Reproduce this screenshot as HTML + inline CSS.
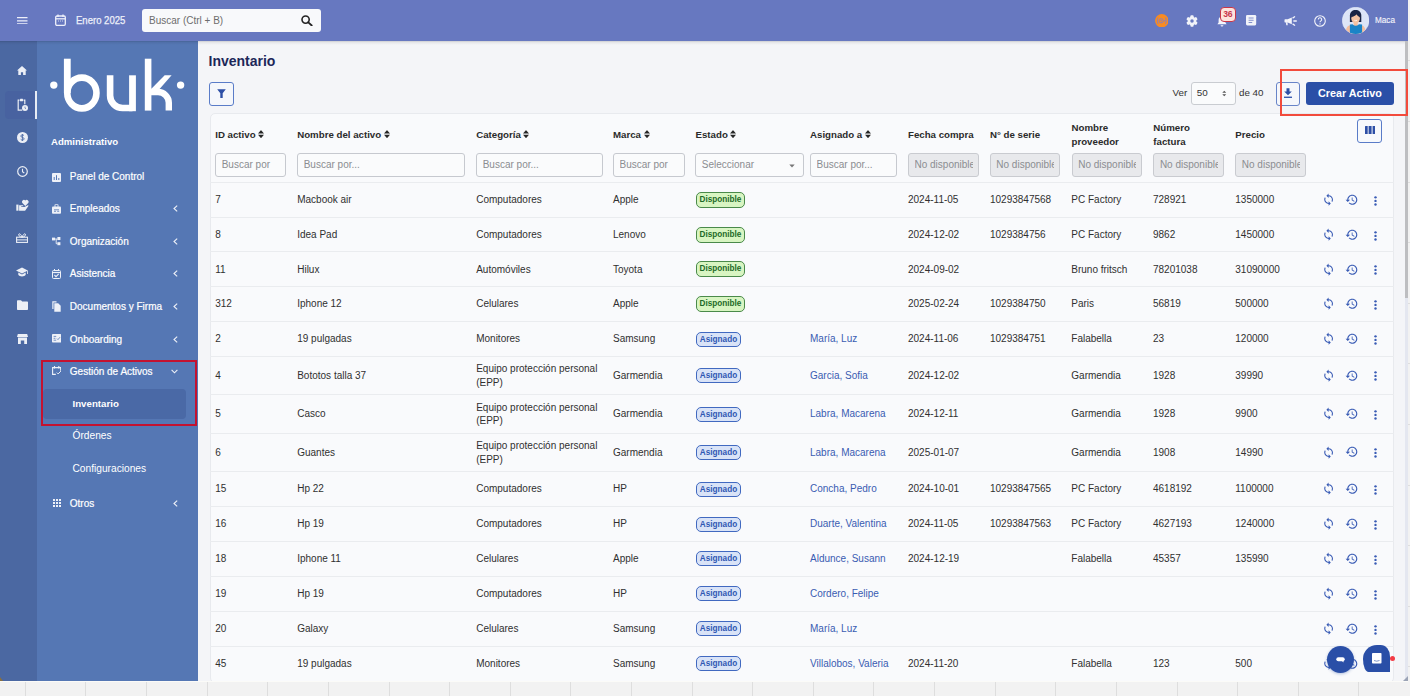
<!DOCTYPE html><html><head><meta charset="utf-8"><style>
*{box-sizing:border-box;margin:0;padding:0}
html,body{width:1410px;height:696px;overflow:hidden;background:#efefef;font-family:"Liberation Sans", sans-serif;}
.a{position:absolute}
.t{position:absolute;white-space:nowrap;line-height:1}
#top{left:0;top:0;width:1408px;height:41px;background:#6778c0}
#rail{left:0;top:41px;width:37px;height:640px;background:#4b68a2}
#side{left:37px;top:41px;width:161px;height:640px;background:#5577b4}
#main{left:198px;top:41px;width:1210px;height:640px;background:#f4f5f8}
#card{left:209.5px;top:113px;width:1184.5px;height:570px;background:#f9fafc;border:1px solid #e8eaee;border-radius:5px}
.hl{position:absolute;left:210px;width:1184px;height:1px;background:#eaecef}
.menu{color:#fff;font-size:10px;-webkit-text-stroke:0.2px #fff}
.inp{position:absolute;top:153px;height:24px;border:1px solid #c6c9cf;border-radius:3px;background:#fafbfc;overflow:hidden}
.inp span{position:absolute;left:5.5px;right:4.8px;overflow:hidden;top:6px;font-size:10px;color:#8b8d91;white-space:nowrap;line-height:1}
.dis{background:#e8e9ec;border-color:#c9cbd0}
.hd{font-size:9.7px;font-weight:bold;color:#2b2b2b}
.cell{font-size:10px;color:#303030}
.lnk{font-size:10px;color:#3a5cb2}
.bd{position:absolute;height:16px;border-radius:5px;font-size:8.2px;font-weight:bold;line-height:14px;text-align:center}
.bg{background:#d8f5c2;border:1px solid #4a8a4a;color:#1e6a28}
.bb{background:#d9e3f7;border:1px solid #4169c0;color:#2f57b3}
</style></head><body><div id="top" class="a"></div>
<div class="a" style="left:1408px;top:0;width:2px;height:696px;background:#f2f2f2"></div>
<div class="a" style="left:1408px;top:60px;width:2px;height:1px;background:#dedede"></div>
<div class="a" style="left:1408px;top:121px;width:2px;height:1px;background:#dedede"></div>
<div class="a" style="left:1408px;top:182px;width:2px;height:1px;background:#dedede"></div>
<div class="a" style="left:1408px;top:242px;width:2px;height:1px;background:#dedede"></div>
<div class="a" style="left:1408px;top:303px;width:2px;height:1px;background:#dedede"></div>
<div class="a" style="left:1408px;top:363px;width:2px;height:1px;background:#dedede"></div>
<div class="a" style="left:1408px;top:424px;width:2px;height:1px;background:#dedede"></div>
<div class="a" style="left:1408px;top:485px;width:2px;height:1px;background:#dedede"></div>
<div class="a" style="left:1408px;top:545px;width:2px;height:1px;background:#dedede"></div>
<div class="a" style="left:1408px;top:606px;width:2px;height:1px;background:#dedede"></div>
<div class="a" style="left:1408px;top:666px;width:2px;height:1px;background:#dedede"></div>
<div id="rail" class="a"></div>
<div id="side" class="a"></div>
<div id="main" class="a"></div>
<div class="a" style="left:0;top:41px;width:1408px;height:4px;background:linear-gradient(rgba(0,0,0,0.16),rgba(0,0,0,0.05) 40%,rgba(0,0,0,0))"></div>
<svg class="a" style="left:17px;top:16.6px" width="10.5" height="7.6" viewBox="0 0 10.5 7.6"><path d="M0 0.7h10.5M0 3.8h10.5M0 6.9h10.5" stroke="#eef0fa" stroke-width="1.3"/></svg>
<svg class="a" style="left:55px;top:14px" width="11" height="12" viewBox="0 0 11 12"><rect x="0.7" y="2" width="9.6" height="9.3" rx="1.2" fill="none" stroke="#eef0fa" stroke-width="1.3"/><path d="M0.7 4.8h9.6" stroke="#eef0fa" stroke-width="1.3"/><path d="M3 0.5v2.5M8 0.5v2.5" stroke="#eef0fa" stroke-width="1.3"/><path d="M3 7h1M5 7h1M7 7h1" stroke="#eef0fa" stroke-width="0.8"/></svg>
<div class="t " style="left:75.8px;top:14.6px;font-size:10.6px;color:#eef0fa;-webkit-text-stroke:0.25px #eef0fa;transform:scaleX(0.9);transform-origin:0 0">Enero 2025</div>
<div class="a" style="left:142px;top:9px;width:179px;height:23px;background:#f8f9fb;border-radius:3px"></div>
<div class="t " style="left:149px;top:15.5px;font-size:10px;color:#6d6d6d">Buscar (Ctrl + B)</div>
<svg class="a" style="left:301px;top:14.5px" width="12" height="11" viewBox="0 0 12 11"><circle cx="4.6" cy="4.6" r="3.6" fill="none" stroke="#222" stroke-width="1.6"/><path d="M7.3 7.3l3.4 3.2" stroke="#222" stroke-width="1.8" stroke-linecap="round"/></svg>
<svg class="a" style="left:1154.6px;top:13.5px" width="13.6" height="13.6" viewBox="0 0 13.6 13.6"><circle cx="6.8" cy="6.8" r="6.75" fill="#f98b20"/><g fill="none" stroke="#8a80b8" stroke-width="0.95"><circle cx="6.2" cy="6.8" r="2.1"/><path d="M3 3.6Q1.6 6.8 3 10M10.6 3.6Q12 6.8 10.6 10M8.3 6.8h2.4"/></g><circle cx="6.2" cy="6.8" r="0.8" fill="#8a80b8"/></svg>
<svg class="a" style="left:1185.6px;top:14.8px" width="12" height="12" viewBox="0 0 12 12"><g fill="#f1f3f9"><circle cx="6" cy="6" r="4.3"/><rect x="4.4" y="0.3" width="3.2" height="3.2" rx="0.9" transform="rotate(0 6 6)"/><rect x="4.4" y="0.3" width="3.2" height="3.2" rx="0.9" transform="rotate(60 6 6)"/><rect x="4.4" y="0.3" width="3.2" height="3.2" rx="0.9" transform="rotate(120 6 6)"/><rect x="4.4" y="0.3" width="3.2" height="3.2" rx="0.9" transform="rotate(180 6 6)"/><rect x="4.4" y="0.3" width="3.2" height="3.2" rx="0.9" transform="rotate(240 6 6)"/><rect x="4.4" y="0.3" width="3.2" height="3.2" rx="0.9" transform="rotate(300 6 6)"/></g><circle cx="6" cy="6" r="1.75" fill="#6879c1"/></svg>
<svg class="a" style="left:1216.5px;top:15.5px" width="10" height="11" viewBox="0 0 10 11"><path fill="#f4f5fb" d="M5 0.5c-2 0-3.4 1.5-3.4 3.5v2.6L0.4 8.3h9.2L8.4 6.6V4C8.4 2 7 0.5 5 0.5zM3.6 9.2a1.4 1.4 0 0 0 2.8 0z"/></svg>
<div class="a" style="left:1220px;top:7px;width:15.5px;height:14.5px;background:#fde3dd;border:1px solid #c8364a;border-radius:4px;color:#c8364a;font-size:8.6px;font-weight:bold;text-align:center;line-height:12.5px;letter-spacing:-0.4px">36</div>
<svg class="a" style="left:1246.4px;top:15.2px" width="10.2" height="10.4" viewBox="0 0 10.2 10.4"><rect x="0" y="0" width="10.2" height="10.4" rx="1.3" fill="#f1f3f9"/><path d="M2.6 3h5M2.6 5.2h5M2.6 7.5h3.6" stroke="#8290cc" stroke-width="1.1"/></svg>
<svg class="a" style="left:1283.5px;top:15.5px" width="13" height="10" viewBox="0 0 13 10"><rect x="0.5" y="3.3" width="3.2" height="3.1" rx="0.6" fill="#f4f5fb"/><path d="M3.1 3.4L7.8 1.5v6.7L3.1 6.3z" fill="#f4f5fb"/><path d="M1.9 6.2h1.6l.2 3H2.3z" fill="#f4f5fb"/><path d="M9 1.9l1.6-1.1M9.8 5h2.5M9 8.1l1.6 1.1" stroke="#f4f5fb" stroke-width="1.3" stroke-linecap="round"/></svg>
<svg class="a" style="left:1314px;top:14.8px" width="12" height="12" viewBox="0 0 12 12"><circle cx="6" cy="6" r="5.3" fill="none" stroke="#f4f5fb" stroke-width="1.1"/><path d="M4.3 4.5a1.7 1.7 0 1 1 2.5 1.5c-.6.3-.8.6-.8 1.3" fill="none" stroke="#f4f5fb" stroke-width="1.1"/><circle cx="6" cy="8.9" r="0.7" fill="#f4f5fb"/></svg>
<svg class="a" style="left:1342px;top:6.8px" width="27.4" height="27.4" viewBox="0 0 27.4 27.4"><defs><clipPath id="av"><circle cx="13.7" cy="13.6" r="13.3"/></clipPath></defs><circle cx="13.7" cy="13.6" r="13.4" fill="#dde5f7" stroke="#eef2fb" stroke-width="0.5"/><g clip-path="url(#av)"><path d="M7.9 15V8.5C7.9 5 10.5 3 13.6 3S19.3 5 19.3 8.5V15z" fill="#1a2444"/><path d="M3.5 27.4C3.5 21 5.5 18.2 9 18h9.4c3.5.2 5.5 3 5.5 9.4z" fill="#f4bf9f"/><rect x="11.7" y="14" width="4" height="5" fill="#f4bf9f"/><path d="M7.9 27.4V17.4l2.6-.2q3.2 3.3 6.5 0l3.1.2V27.4z" fill="#1a84c7"/><ellipse cx="13.6" cy="11.6" rx="4.3" ry="4.7" fill="#f5c3a2"/><path d="M9.2 10C9.5 6.5 11 5 13.6 5s4.4 1.7 4.6 5c-1.6-.4-3-1.5-3.6-2.8C13.6 8.5 11.5 9.6 9.2 10z" fill="#1a2444"/><path d="M12.4 13.3q1.3.9 2.6 0" stroke="#fff" stroke-width="0.8" fill="none"/></g></svg>
<div class="t " style="left:1375.3px;top:16.3px;font-size:8.9px;color:#f2f3fa;transform:scaleX(0.92);transform-origin:0 0;-webkit-text-stroke:0.15px #f2f3fa">Maca</div>
<div class="a" style="left:4.5px;top:91px;width:31px;height:28px;background:#4862a0;border-radius:4px"></div>
<div class="a" style="left:35px;top:91px;width:2px;height:28px;background:#e8ecf4"></div>
<svg class="a" style="left:17px;top:66px" width="10" height="9" viewBox="0 0 10 9"><path fill="#eceff6" d="M5 0L0 4.4h1.3V9h2.6V6.3h2.2V9h2.6V4.4H10z"/></svg>
<svg class="a" style="left:16.5px;top:97.5px" width="11" height="13" viewBox="0 0 11 13"><path d="M2.5 2.2H1.2v10h4" fill="none" stroke="#eceff6" stroke-width="1.2"/><path d="M6.5 2.2h1.3v4" fill="none" stroke="#eceff6" stroke-width="1.2"/><rect x="3" y="0.8" width="3" height="2.4" rx="0.5" fill="#eceff6"/><circle cx="8" cy="10" r="3" fill="#eceff6"/><path d="M8 8.6v1.6l.9.6" stroke="#4862a0" stroke-width="0.7" fill="none"/></svg>
<svg class="a" style="left:16.5px;top:132px" width="11" height="11" viewBox="0 0 11 11"><circle cx="5.5" cy="5.5" r="5.5" fill="#eceff6"/><path d="M7 3.6c-.4-.5-1-.7-1.6-.7-.9 0-1.6.5-1.6 1.2 0 1.6 3.3.9 3.3 2.7 0 .7-.7 1.3-1.7 1.3-.7 0-1.3-.3-1.7-.8M5.4 2v7" fill="none" stroke="#4a68a4" stroke-width="0.9"/></svg>
<svg class="a" style="left:16.5px;top:165.5px" width="11" height="11" viewBox="0 0 11 11"><circle cx="5.5" cy="5.5" r="4.8" fill="none" stroke="#eceff6" stroke-width="1.2"/><path d="M5.5 2.8v2.9l1.8 1.3" fill="none" stroke="#eceff6" stroke-width="1.1"/></svg>
<svg class="a" style="left:15.5px;top:198.5px" width="13" height="12" viewBox="0 0 13 12"><path d="M9.3 6.9L6.6 4.2A1.75 1.75 0 0 1 9.3 1.5A1.75 1.75 0 0 1 12 4.2z" fill="#eceff6"/><rect x="0.3" y="5.6" width="2.2" height="6.1" fill="#eceff6"/><path d="M3.1 6.2h3.1c.8 0 1.3.5 1.3 1.1H5.3v.8h3.1l3-1.7c.6-.3 1.2.1 1 .6L9.1 11.7h-6z" fill="#eceff6"/></svg>
<svg class="a" style="left:15.8px;top:231.8px" width="12.2" height="11" viewBox="0 0 12.2 11"><path d="M6.1 5.2C5.2 2.6 3.6 1.2 2.9 2S3.1 5 6.1 5.2zM6.1 5.2C7 2.6 8.6 1.2 9.3 2S9.1 5 6.1 5.2z" fill="none" stroke="#eceff6" stroke-width="1"/><rect x="0.6" y="5.2" width="11" height="5.2" fill="none" stroke="#eceff6" stroke-width="1.1"/><path d="M0.6 7.9h11" stroke="#eceff6" stroke-width="1"/></svg>
<svg class="a" style="left:16px;top:266.5px" width="12" height="10" viewBox="0 0 12 10"><path fill="#eceff6" d="M6 0.5L0 3.5l6 3 5-2.5v3h.8V3.5z"/><path fill="#eceff6" d="M2.3 5.5v2.2C3 8.7 4.5 9.4 6 9.4s3-.7 3.7-1.7V5.5L6 7.4z"/></svg>
<svg class="a" style="left:16.5px;top:300px" width="11" height="10" viewBox="0 0 11 10"><path fill="#eceff6" d="M0 1.2C0 .6.4.2 1 .2h3l1.2 1.3H10c.6 0 1 .4 1 1V9c0 .6-.4 1-1 1H1c-.6 0-1-.4-1-1z"/></svg>
<svg class="a" style="left:16.5px;top:334px" width="11" height="10" viewBox="0 0 11 10"><path fill="#eceff6" d="M0.8 0h9.4l.8 3H0z"/><path fill="#eceff6" d="M1 3.6h9V10H7.2V6.5H3.8V10H1z"/></svg>
<svg class="a" style="left:40px;top:50px" width="155" height="70" viewBox="40 50 155 70"><circle cx="53.8" cy="85.1" r="3.7" fill="#ffffff"/><circle cx="180.6" cy="85.1" r="3.7" fill="#ffffff"/><path d="M67.3 58.7V93" stroke="#ffffff" stroke-width="6.8" fill="none"/><ellipse cx="81.85" cy="93" rx="14.6" ry="15.4" stroke="#ffffff" stroke-width="6.6" fill="none"/><path d="M110.1 75.3V95.5a12.5 12.5 0 0 0 12.5 12.5H132.5" stroke="#ffffff" stroke-width="6.6" fill="none"/><path d="M132.5 75.3V111.2" stroke="#ffffff" stroke-width="6.8" fill="none"/><path d="M148.1 58.7V110.6" stroke="#ffffff" stroke-width="6.6" fill="none"/><path d="M151 92H158a10.8 10.8 0 0 1 10.8 10.8V110.6" stroke="#ffffff" stroke-width="6.4" fill="none"/><path d="M151.4 88.8L164.7 75.3H171.6L157.8 91L151.4 92z" fill="#ffffff"/></svg>
<div class="t " style="left:51px;top:136.6px;font-size:9.6px;font-weight:bold;color:#fff">Administrativo</div>
<div class="t menu" style="left:69.8px;top:172.3px;font-size:10px">Panel de Control</div>
<div class="t menu" style="left:69.8px;top:204.4px;font-size:10px">Empleados</div>
<svg class="a" style="left:172.5px;top:205.4px" width="5" height="7" viewBox="0 0 5 7"><path d="M4.2 0.6L1 3.5l3.2 2.9" fill="none" stroke="#eef1f8" stroke-width="1.1"/></svg>
<div class="t menu" style="left:69.8px;top:236.7px;font-size:10px">Organización</div>
<svg class="a" style="left:172.5px;top:237.7px" width="5" height="7" viewBox="0 0 5 7"><path d="M4.2 0.6L1 3.5l3.2 2.9" fill="none" stroke="#eef1f8" stroke-width="1.1"/></svg>
<div class="t menu" style="left:69.8px;top:269.0px;font-size:10px">Asistencia</div>
<svg class="a" style="left:172.5px;top:270.0px" width="5" height="7" viewBox="0 0 5 7"><path d="M4.2 0.6L1 3.5l3.2 2.9" fill="none" stroke="#eef1f8" stroke-width="1.1"/></svg>
<div class="t menu" style="left:69.8px;top:301.8px;font-size:10px">Documentos y Firma</div>
<svg class="a" style="left:172.5px;top:302.8px" width="5" height="7" viewBox="0 0 5 7"><path d="M4.2 0.6L1 3.5l3.2 2.9" fill="none" stroke="#eef1f8" stroke-width="1.1"/></svg>
<div class="t menu" style="left:69.8px;top:334.5px;font-size:10px">Onboarding</div>
<svg class="a" style="left:172.5px;top:335.5px" width="5" height="7" viewBox="0 0 5 7"><path d="M4.2 0.6L1 3.5l3.2 2.9" fill="none" stroke="#eef1f8" stroke-width="1.1"/></svg>
<div class="t menu" style="left:69.8px;top:366.5px;font-size:10px">Gestión de Activos</div>
<svg class="a" style="left:170.5px;top:369px" width="7" height="5" viewBox="0 0 7 5"><path d="M0.6 0.8L3.5 3.8l2.9-3" fill="none" stroke="#eef1f8" stroke-width="1.1"/></svg>
<svg class="a" style="left:52px;top:172.5px" width="9" height="9" viewBox="0 0 9 9"><rect width="9" height="9" rx="1" fill="#eef1f8"/><path d="M2.2 7V4M4.5 7V2.2M6.8 7V5" stroke="#5577b4" stroke-width="1"/></svg>
<svg class="a" style="left:52px;top:203.5px" width="9" height="10" viewBox="0 0 9 10"><rect y="2.6" width="9" height="7.2" rx="1" fill="#eef1f8"/><rect x="3" y="0.3" width="3" height="3.2" rx="0.6" fill="none" stroke="#eef1f8" stroke-width="0.9"/><path d="M2 7.3h2M5.2 7.3h2M2 5.8h5" stroke="#5577b4" stroke-width="0.8"/></svg>
<svg class="a" style="left:51.8px;top:237px" width="9" height="9" viewBox="0 0 9 9"><rect x="0" y="0.6" width="3" height="2.8" fill="#eef1f8"/><rect x="5.4" y="0" width="3" height="3" fill="#eef1f8"/><rect x="5.4" y="5.2" width="3" height="3" fill="#eef1f8"/><path d="M3 2h2.4M4.2 2v4.7h1.2" stroke="#eef1f8" stroke-width="0.9" fill="none"/></svg>
<svg class="a" style="left:52px;top:268.5px" width="9" height="10" viewBox="0 0 9 10"><rect x="0.5" y="1.5" width="8" height="8" rx="1" fill="none" stroke="#eef1f8" stroke-width="1"/><path d="M0.5 3.5h8" stroke="#eef1f8" stroke-width="1.2"/><path d="M2.5 0v2M6.5 0v2" stroke="#eef1f8" stroke-width="1"/><path d="M2.4 6l1.6 1.6 2.7-2.8" stroke="#eef1f8" stroke-width="1.1" fill="none"/></svg>
<svg class="a" style="left:51.7px;top:300.8px" width="9" height="11" viewBox="0 0 9 11"><path d="M0.3 0.3h4.2v1.2H1.5v6.6H0.3z" fill="#eef1f8"/><path d="M2.3 2.2h3.9L8.7 4.7v6H2.3z" fill="#eef1f8"/></svg>
<svg class="a" style="left:51.7px;top:334px" width="9.2" height="8.6" viewBox="0 0 9.2 8.6"><rect width="9.2" height="8.6" rx="0.8" fill="#eef1f8"/><path d="M1.6 2.4h2.6M1.6 4.3h1.8M1.6 6.2h2.6M5 4.6l1 1 2-2.4" stroke="#5577b4" stroke-width="0.8" fill="none"/></svg>
<svg class="a" style="left:51.7px;top:366.3px" width="9.3" height="9" viewBox="0 0 9.3 9"><path d="M3.8 8.4H0.6V1.6h8.1v3.2" fill="none" stroke="#eef1f8" stroke-width="1.1"/><path d="M2.5 0v2.4M6.8 0v2.4" stroke="#eef1f8" stroke-width="1.1"/><path d="M4.8 6.6l1.3 1.3 2.8-2.8" stroke="#eef1f8" stroke-width="1" fill="none"/></svg>
<div class="a" style="left:40.5px;top:360px;width:156px;height:65.5px;border:2px solid #c41230"></div>
<div class="a" style="left:43.3px;top:388.5px;width:143.2px;height:30.5px;background:#4a69a6;border-radius:4px"></div>
<div class="t " style="left:72.5px;top:398.6px;font-size:9.7px;font-weight:bold;color:#fff">Inventario</div>
<div class="t " style="left:72.5px;top:431.2px;font-size:10.2px;color:#fff">Órdenes</div>
<div class="t " style="left:72.5px;top:464.3px;font-size:10.2px;color:#fff">Configuraciones</div>
<div class="t menu" style="left:69.8px;top:498.8px;font-size:10px">Otros</div>
<svg class="a" style="left:52.5px;top:499px" width="8" height="8" viewBox="0 0 8 8"><path d="M0 0h2v2H0zM3 0h2v2H3zM6 0h2v2H6zM0 3h2v2H0zM3 3h2v2H3zM6 3h2v2H6zM0 6h2v2H0zM3 6h2v2H3zM6 6h2v2H6z" fill="#eef1f8"/></svg>
<svg class="a" style="left:172.5px;top:499.8px" width="5" height="7" viewBox="0 0 5 7"><path d="M4.2 0.6L1 3.5l3.2 2.9" fill="none" stroke="#eef1f8" stroke-width="1.1"/></svg>
<div class="t " style="left:208.5px;top:54px;font-size:14px;font-weight:bold;color:#1c2759">Inventario</div>
<div class="a" style="left:209px;top:82px;width:25px;height:23.5px;border:1px solid #5a7cc8;border-bottom-width:1.5px;border-radius:3px;background:#f5f7fb"></div>
<svg class="a" style="left:216.9px;top:88.6px" width="9" height="9.5" viewBox="0 0 9 9.5"><path d="M0.2 0.2h8.6L5.7 4.3V9a.5.5 0 0 1-.5.5H3.8a.5.5 0 0 1-.5-.5V4.3z" fill="#2d4fa6"/></svg>
<div class="t " style="left:1172.5px;top:88px;font-size:9.8px;color:#333">Ver</div>
<div class="a" style="left:1191px;top:82px;width:44.5px;height:23px;border:1px solid #c9ccd1;border-radius:3px;background:#fafbfc"></div>
<div class="t " style="left:1196.7px;top:88px;font-size:9.9px;color:#333">50</div>
<svg class="a" style="left:1222px;top:90px" width="4.5" height="7" viewBox="0 0 5 7"><path d="M0.3 2.8L2.5 0.4l2.2 2.4zM0.3 4.2L2.5 6.6l2.2-2.4z" fill="#555"/></svg>
<div class="t " style="left:1239px;top:88px;font-size:9.8px;color:#333">de 40</div>
<div class="a" style="left:1276px;top:82px;width:24px;height:23.5px;border:1px solid #6884c8;border-bottom-width:1.5px;border-radius:3px;background:#f5f7fb"></div>
<svg class="a" style="left:1284px;top:87.8px" width="8" height="10.4" viewBox="0 0 8 10.4"><path d="M2.5 0.2h3v3.4h2.3L4 7.3 0.2 3.6h2.3z" fill="#2d4fa6"/><rect x="0" y="8.6" width="8" height="1.5" fill="#3a5cb0"/></svg>
<div class="a" style="left:1306px;top:82px;width:88px;height:23px;background:#2a4fa7;border-radius:3px"></div>
<div class="t " style="left:1318px;top:88.2px;font-size:10.8px;font-weight:bold;color:#fff">Crear Activo</div>
<div class="a" style="left:1405px;top:41px;width:3px;height:640px;background:#e4e7f0"></div>
<div class="a" style="left:1405px;top:41px;width:3px;height:256.5px;background:#bdbec1"></div>
<svg class="a" style="left:1403px;top:676px" width="5" height="5" viewBox="0 0 5 5"><path d="M5 0V5H0z" fill="#9aa3b5"/></svg>
<div id="card" class="a"></div>
<div class="a" style="left:1357px;top:119px;width:25px;height:23.5px;border:1px solid #5a7cc8;border-bottom-width:1.5px;border-radius:3px;background:#f7f9fc"></div>
<svg class="a" style="left:1364.5px;top:126px" width="10.4" height="8.2" viewBox="0 0 10.4 8.2"><path d="M0 0.4Q0 0 .4 0h2.3v8.2H.4Q0 8.2 0 7.8zM3.6 0h3v8.2h-3zM7.6 0h2.4q.4 0 .4.4v7.4q0 .4-.4.4H7.6z" fill="#2d4fa6"/></svg>
<div class="t hd" style="left:215.2px;top:129.8px;">ID activo<svg style="margin-left:2.6px;vertical-align:-0.2px" width="6" height="8.2" viewBox="0 0 6 8.2"><path d="M0 3.6L2.6 0.4Q3 0 3.4 0.4L6 3.6zM0 4.7L2.6 7.8Q3 8.2 3.4 7.8L6 4.7z" fill="#262626"/></svg></div>
<div class="t hd" style="left:297.2px;top:129.8px;">Nombre del activo<svg style="margin-left:2.6px;vertical-align:-0.2px" width="6" height="8.2" viewBox="0 0 6 8.2"><path d="M0 3.6L2.6 0.4Q3 0 3.4 0.4L6 3.6zM0 4.7L2.6 7.8Q3 8.2 3.4 7.8L6 4.7z" fill="#262626"/></svg></div>
<div class="t hd" style="left:476.2px;top:129.8px;">Categoría<svg style="margin-left:2.6px;vertical-align:-0.2px" width="6" height="8.2" viewBox="0 0 6 8.2"><path d="M0 3.6L2.6 0.4Q3 0 3.4 0.4L6 3.6zM0 4.7L2.6 7.8Q3 8.2 3.4 7.8L6 4.7z" fill="#262626"/></svg></div>
<div class="t hd" style="left:613px;top:129.8px;">Marca<svg style="margin-left:2.6px;vertical-align:-0.2px" width="6" height="8.2" viewBox="0 0 6 8.2"><path d="M0 3.6L2.6 0.4Q3 0 3.4 0.4L6 3.6zM0 4.7L2.6 7.8Q3 8.2 3.4 7.8L6 4.7z" fill="#262626"/></svg></div>
<div class="t hd" style="left:695.5px;top:129.8px;">Estado<svg style="margin-left:2.6px;vertical-align:-0.2px" width="6" height="8.2" viewBox="0 0 6 8.2"><path d="M0 3.6L2.6 0.4Q3 0 3.4 0.4L6 3.6zM0 4.7L2.6 7.8Q3 8.2 3.4 7.8L6 4.7z" fill="#262626"/></svg></div>
<div class="t hd" style="left:810px;top:129.8px;">Asignado a<svg style="margin-left:2.6px;vertical-align:-0.2px" width="6" height="8.2" viewBox="0 0 6 8.2"><path d="M0 3.6L2.6 0.4Q3 0 3.4 0.4L6 3.6zM0 4.7L2.6 7.8Q3 8.2 3.4 7.8L6 4.7z" fill="#262626"/></svg></div>
<div class="t hd" style="left:908px;top:129.8px;">Fecha compra</div>
<div class="t hd" style="left:990px;top:129.8px;">N° de serie</div>
<div class="t hd" style="left:1071.5px;top:121px;line-height:13.5px">Nombre<br>proveedor</div>
<div class="t hd" style="left:1153.3px;top:121px;line-height:13.5px">Número<br>factura</div>
<div class="t hd" style="left:1235.3px;top:129.8px;">Precio</div>
<div class="inp" style="left:215.2px;width:71.10000000000002px"><span>Buscar por</span></div>
<div class="inp" style="left:297.2px;width:167.5px"><span>Buscar por...</span></div>
<div class="inp" style="left:476.2px;width:126.50000000000006px"><span>Buscar por...</span></div>
<div class="inp" style="left:613px;width:71.79999999999995px"><span>Buscar por</span></div>
<div class="inp" style="left:695.3px;width:108.5px"><span>Seleccionar</span></div>
<div class="inp" style="left:810px;width:86.79999999999995px"><span>Buscar por...</span></div>
<div class="inp dis" style="left:908px;width:70.70000000000005px"><span>No disponible</span></div>
<div class="inp dis" style="left:989.8px;width:70.20000000000005px"><span>No disponible</span></div>
<div class="inp dis" style="left:1071.7px;width:70.09999999999991px"><span>No disponible</span></div>
<div class="inp dis" style="left:1153.4px;width:70.39999999999986px"><span>No disponible</span></div>
<div class="inp dis" style="left:1235.3px;width:70.40000000000009px"><span>No disponible</span></div>
<svg class="a" style="left:789px;top:163.5px" width="6" height="4" viewBox="0 0 6 4"><path d="M0.3 0.5h5.4L3 3.5z" fill="#777"/></svg>
<div class="hl" style="top:182.0px"></div>
<div class="hl" style="top:216.7px"></div>
<div class="hl" style="top:251.4px"></div>
<div class="hl" style="top:286.1px"></div>
<div class="hl" style="top:320.8px"></div>
<div class="hl" style="top:355.5px"></div>
<div class="hl" style="top:394.0px"></div>
<div class="hl" style="top:432.5px"></div>
<div class="hl" style="top:470.8px"></div>
<div class="hl" style="top:505.7px"></div>
<div class="hl" style="top:540.5px"></div>
<div class="hl" style="top:575.5px"></div>
<div class="hl" style="top:610.5px"></div>
<div class="hl" style="top:645.5px"></div>
<div class="hl" style="top:680.5px"></div>
<div class="t cell" style="left:215.2px;top:195.35px;">7</div>
<div class="t cell" style="left:297.2px;top:195.35px;">Macbook air</div>
<div class="t cell" style="left:476.2px;top:195.35px;">Computadores</div>
<div class="t cell" style="left:613px;top:195.35px;">Apple</div>
<div class="bd bg" style="left:696px;top:192.04999999999998px;width:49px">Disponible</div>
<div class="t cell" style="left:908px;top:195.35px;">2024-11-05</div>
<div class="t cell" style="left:990px;top:195.35px;">10293847568</div>
<div class="t cell" style="left:1071.3px;top:195.35px;">PC Factory</div>
<div class="t cell" style="left:1153px;top:195.35px;">728921</div>
<div class="t cell" style="left:1235.3px;top:195.35px;">1350000</div>
<svg class="a" style="left:1321.7px;top:193.35px" width="13.2" height="13.2" viewBox="0 0 24 24"><path fill="#3a5cb5" d="M12 4V1L8 5l4 4V6c3.31 0 6 2.69 6 6 0 1.01-.25 1.97-.7 2.8l1.46 1.46C19.54 15.03 20 13.57 20 12c0-4.42-3.58-8-8-8zm0 14c-3.31 0-6-2.69-6-6 0-1.01.25-1.97.7-2.8L5.24 7.74C4.46 8.97 4 10.43 4 12c0 4.420 3.58 8 8 8v3l4-4-4-4v3z"/></svg>
<svg class="a" style="left:1345.2px;top:193.1px" width="13.44" height="13.44" viewBox="0 0 24 24"><path fill="#3a5cb5" d="M13 3c-4.97 0-9 4.03-9 9H1l3.89 3.89.07.14L9 12H6c0-3.87 3.13-7 7-7s7 3.130 7 7-3.13 7-7 7c-1.93 0-3.68-.79-4.94-2.06l-1.42 1.42C8.27 19.99 10.51 21 13 21c4.97 0 9-4.03 9-9s-4.03-9-9-9zm-1 5v5l4.28 2.54.72-1.21-3.5-2.08V8H12z"/></svg>
<svg class="a" style="left:1374px;top:194.85px" width="3" height="11" viewBox="0 0 3 11"><circle cx="1.5" cy="2.35" r="1.2" fill="#3a5cb5"/><circle cx="1.5" cy="5.9" r="1.2" fill="#3a5cb5"/><circle cx="1.5" cy="9.45" r="1.2" fill="#3a5cb5"/></svg>
<div class="t cell" style="left:215.2px;top:230.05px;">8</div>
<div class="t cell" style="left:297.2px;top:230.05px;">Idea Pad</div>
<div class="t cell" style="left:476.2px;top:230.05px;">Computadores</div>
<div class="t cell" style="left:613px;top:230.05px;">Lenovo</div>
<div class="bd bg" style="left:696px;top:226.75px;width:49px">Disponible</div>
<div class="t cell" style="left:908px;top:230.05px;">2024-12-02</div>
<div class="t cell" style="left:990px;top:230.05px;">1029384756</div>
<div class="t cell" style="left:1071.3px;top:230.05px;">PC Factory</div>
<div class="t cell" style="left:1153px;top:230.05px;">9862</div>
<div class="t cell" style="left:1235.3px;top:230.05px;">1450000</div>
<svg class="a" style="left:1321.7px;top:228.05px" width="13.2" height="13.2" viewBox="0 0 24 24"><path fill="#3a5cb5" d="M12 4V1L8 5l4 4V6c3.31 0 6 2.69 6 6 0 1.01-.25 1.97-.7 2.8l1.46 1.46C19.54 15.03 20 13.57 20 12c0-4.42-3.58-8-8-8zm0 14c-3.31 0-6-2.69-6-6 0-1.01.25-1.97.7-2.8L5.24 7.74C4.46 8.97 4 10.43 4 12c0 4.420 3.58 8 8 8v3l4-4-4-4v3z"/></svg>
<svg class="a" style="left:1345.2px;top:227.8px" width="13.44" height="13.44" viewBox="0 0 24 24"><path fill="#3a5cb5" d="M13 3c-4.97 0-9 4.03-9 9H1l3.89 3.89.07.14L9 12H6c0-3.87 3.13-7 7-7s7 3.130 7 7-3.13 7-7 7c-1.93 0-3.68-.79-4.94-2.06l-1.42 1.42C8.27 19.99 10.51 21 13 21c4.97 0 9-4.03 9-9s-4.03-9-9-9zm-1 5v5l4.28 2.54.72-1.21-3.5-2.08V8H12z"/></svg>
<svg class="a" style="left:1374px;top:229.55px" width="3" height="11" viewBox="0 0 3 11"><circle cx="1.5" cy="2.35" r="1.2" fill="#3a5cb5"/><circle cx="1.5" cy="5.9" r="1.2" fill="#3a5cb5"/><circle cx="1.5" cy="9.45" r="1.2" fill="#3a5cb5"/></svg>
<div class="t cell" style="left:215.2px;top:264.75px;">11</div>
<div class="t cell" style="left:297.2px;top:264.75px;">Hilux</div>
<div class="t cell" style="left:476.2px;top:264.75px;">Automóviles</div>
<div class="t cell" style="left:613px;top:264.75px;">Toyota</div>
<div class="bd bg" style="left:696px;top:261.45px;width:49px">Disponible</div>
<div class="t cell" style="left:908px;top:264.75px;">2024-09-02</div>
<div class="t cell" style="left:1071.3px;top:264.75px;">Bruno fritsch</div>
<div class="t cell" style="left:1153px;top:264.75px;">78201038</div>
<div class="t cell" style="left:1235.3px;top:264.75px;">31090000</div>
<svg class="a" style="left:1321.7px;top:262.75px" width="13.2" height="13.2" viewBox="0 0 24 24"><path fill="#3a5cb5" d="M12 4V1L8 5l4 4V6c3.31 0 6 2.69 6 6 0 1.01-.25 1.97-.7 2.8l1.46 1.46C19.54 15.03 20 13.57 20 12c0-4.42-3.58-8-8-8zm0 14c-3.31 0-6-2.69-6-6 0-1.01.25-1.97.7-2.8L5.24 7.74C4.46 8.97 4 10.43 4 12c0 4.420 3.58 8 8 8v3l4-4-4-4v3z"/></svg>
<svg class="a" style="left:1345.2px;top:262.5px" width="13.44" height="13.44" viewBox="0 0 24 24"><path fill="#3a5cb5" d="M13 3c-4.97 0-9 4.03-9 9H1l3.89 3.89.07.14L9 12H6c0-3.87 3.13-7 7-7s7 3.130 7 7-3.13 7-7 7c-1.93 0-3.68-.79-4.94-2.06l-1.42 1.42C8.27 19.99 10.51 21 13 21c4.97 0 9-4.03 9-9s-4.03-9-9-9zm-1 5v5l4.28 2.54.72-1.21-3.5-2.08V8H12z"/></svg>
<svg class="a" style="left:1374px;top:264.25px" width="3" height="11" viewBox="0 0 3 11"><circle cx="1.5" cy="2.35" r="1.2" fill="#3a5cb5"/><circle cx="1.5" cy="5.9" r="1.2" fill="#3a5cb5"/><circle cx="1.5" cy="9.45" r="1.2" fill="#3a5cb5"/></svg>
<div class="t cell" style="left:215.2px;top:299.45000000000005px;">312</div>
<div class="t cell" style="left:297.2px;top:299.45000000000005px;">Iphone 12</div>
<div class="t cell" style="left:476.2px;top:299.45000000000005px;">Celulares</div>
<div class="t cell" style="left:613px;top:299.45000000000005px;">Apple</div>
<div class="bd bg" style="left:696px;top:296.15000000000003px;width:49px">Disponible</div>
<div class="t cell" style="left:908px;top:299.45000000000005px;">2025-02-24</div>
<div class="t cell" style="left:990px;top:299.45000000000005px;">1029384750</div>
<div class="t cell" style="left:1071.3px;top:299.45000000000005px;">Paris</div>
<div class="t cell" style="left:1153px;top:299.45000000000005px;">56819</div>
<div class="t cell" style="left:1235.3px;top:299.45000000000005px;">500000</div>
<svg class="a" style="left:1321.7px;top:297.45000000000005px" width="13.2" height="13.2" viewBox="0 0 24 24"><path fill="#3a5cb5" d="M12 4V1L8 5l4 4V6c3.31 0 6 2.69 6 6 0 1.01-.25 1.97-.7 2.8l1.46 1.46C19.54 15.03 20 13.57 20 12c0-4.42-3.58-8-8-8zm0 14c-3.31 0-6-2.69-6-6 0-1.01.25-1.97.7-2.8L5.24 7.74C4.46 8.97 4 10.43 4 12c0 4.420 3.58 8 8 8v3l4-4-4-4v3z"/></svg>
<svg class="a" style="left:1345.2px;top:297.20000000000005px" width="13.44" height="13.44" viewBox="0 0 24 24"><path fill="#3a5cb5" d="M13 3c-4.97 0-9 4.03-9 9H1l3.89 3.89.07.14L9 12H6c0-3.87 3.13-7 7-7s7 3.130 7 7-3.13 7-7 7c-1.93 0-3.68-.79-4.94-2.06l-1.42 1.42C8.27 19.99 10.51 21 13 21c4.97 0 9-4.03 9-9s-4.03-9-9-9zm-1 5v5l4.28 2.54.72-1.21-3.5-2.08V8H12z"/></svg>
<svg class="a" style="left:1374px;top:298.95000000000005px" width="3" height="11" viewBox="0 0 3 11"><circle cx="1.5" cy="2.35" r="1.2" fill="#3a5cb5"/><circle cx="1.5" cy="5.9" r="1.2" fill="#3a5cb5"/><circle cx="1.5" cy="9.45" r="1.2" fill="#3a5cb5"/></svg>
<div class="t cell" style="left:215.2px;top:334.15px;">2</div>
<div class="t cell" style="left:297.2px;top:334.15px;">19 pulgadas</div>
<div class="t cell" style="left:476.2px;top:334.15px;">Monitores</div>
<div class="t cell" style="left:613px;top:334.15px;">Samsung</div>
<div class="bd bb" style="left:696px;top:331.54999999999995px;width:45px;height:15px;line-height:13px">Asignado</div>
<div class="t lnk" style="left:810px;top:334.15px;">María, Luz</div>
<div class="t cell" style="left:908px;top:334.15px;">2024-11-06</div>
<div class="t cell" style="left:990px;top:334.15px;">1029384751</div>
<div class="t cell" style="left:1071.3px;top:334.15px;">Falabella</div>
<div class="t cell" style="left:1153px;top:334.15px;">23</div>
<div class="t cell" style="left:1235.3px;top:334.15px;">120000</div>
<svg class="a" style="left:1321.7px;top:332.15px" width="13.2" height="13.2" viewBox="0 0 24 24"><path fill="#3a5cb5" d="M12 4V1L8 5l4 4V6c3.31 0 6 2.69 6 6 0 1.01-.25 1.97-.7 2.8l1.46 1.46C19.54 15.03 20 13.57 20 12c0-4.42-3.58-8-8-8zm0 14c-3.31 0-6-2.69-6-6 0-1.01.25-1.97.7-2.8L5.24 7.74C4.46 8.97 4 10.43 4 12c0 4.420 3.58 8 8 8v3l4-4-4-4v3z"/></svg>
<svg class="a" style="left:1345.2px;top:331.9px" width="13.44" height="13.44" viewBox="0 0 24 24"><path fill="#3a5cb5" d="M13 3c-4.97 0-9 4.03-9 9H1l3.89 3.89.07.14L9 12H6c0-3.87 3.13-7 7-7s7 3.130 7 7-3.13 7-7 7c-1.93 0-3.68-.79-4.94-2.06l-1.42 1.42C8.27 19.99 10.51 21 13 21c4.97 0 9-4.03 9-9s-4.03-9-9-9zm-1 5v5l4.28 2.54.72-1.21-3.5-2.08V8H12z"/></svg>
<svg class="a" style="left:1374px;top:333.65px" width="3" height="11" viewBox="0 0 3 11"><circle cx="1.5" cy="2.35" r="1.2" fill="#3a5cb5"/><circle cx="1.5" cy="5.9" r="1.2" fill="#3a5cb5"/><circle cx="1.5" cy="9.45" r="1.2" fill="#3a5cb5"/></svg>
<div class="t cell" style="left:215.2px;top:370.75px;">4</div>
<div class="t cell" style="left:297.2px;top:370.75px;">Bototos talla 37</div>
<div class="t cell" style="left:476.2px;top:362.35px;line-height:13.5px">Equipo protección personal<br>(EPP)</div>
<div class="t cell" style="left:613px;top:370.75px;">Garmendia</div>
<div class="bd bb" style="left:696px;top:368.15px;width:45px;height:15px;line-height:13px">Asignado</div>
<div class="t lnk" style="left:810px;top:370.75px;">Garcia, Sofia</div>
<div class="t cell" style="left:908px;top:370.75px;">2024-12-02</div>
<div class="t cell" style="left:1071.3px;top:370.75px;">Garmendia</div>
<div class="t cell" style="left:1153px;top:370.75px;">1928</div>
<div class="t cell" style="left:1235.3px;top:370.75px;">39990</div>
<svg class="a" style="left:1321.7px;top:368.75px" width="13.2" height="13.2" viewBox="0 0 24 24"><path fill="#3a5cb5" d="M12 4V1L8 5l4 4V6c3.31 0 6 2.69 6 6 0 1.01-.25 1.97-.7 2.8l1.46 1.46C19.54 15.03 20 13.57 20 12c0-4.42-3.58-8-8-8zm0 14c-3.31 0-6-2.69-6-6 0-1.01.25-1.97.7-2.8L5.24 7.74C4.46 8.97 4 10.43 4 12c0 4.420 3.58 8 8 8v3l4-4-4-4v3z"/></svg>
<svg class="a" style="left:1345.2px;top:368.5px" width="13.44" height="13.44" viewBox="0 0 24 24"><path fill="#3a5cb5" d="M13 3c-4.97 0-9 4.03-9 9H1l3.89 3.89.07.14L9 12H6c0-3.87 3.13-7 7-7s7 3.130 7 7-3.13 7-7 7c-1.93 0-3.68-.79-4.94-2.06l-1.42 1.42C8.27 19.99 10.51 21 13 21c4.97 0 9-4.03 9-9s-4.03-9-9-9zm-1 5v5l4.28 2.54.72-1.21-3.5-2.08V8H12z"/></svg>
<svg class="a" style="left:1374px;top:370.25px" width="3" height="11" viewBox="0 0 3 11"><circle cx="1.5" cy="2.35" r="1.2" fill="#3a5cb5"/><circle cx="1.5" cy="5.9" r="1.2" fill="#3a5cb5"/><circle cx="1.5" cy="9.45" r="1.2" fill="#3a5cb5"/></svg>
<div class="t cell" style="left:215.2px;top:409.25px;">5</div>
<div class="t cell" style="left:297.2px;top:409.25px;">Casco</div>
<div class="t cell" style="left:476.2px;top:400.85px;line-height:13.5px">Equipo protección personal<br>(EPP)</div>
<div class="t cell" style="left:613px;top:409.25px;">Garmendia</div>
<div class="bd bb" style="left:696px;top:406.65px;width:45px;height:15px;line-height:13px">Asignado</div>
<div class="t lnk" style="left:810px;top:409.25px;">Labra, Macarena</div>
<div class="t cell" style="left:908px;top:409.25px;">2024-12-11</div>
<div class="t cell" style="left:1071.3px;top:409.25px;">Garmendia</div>
<div class="t cell" style="left:1153px;top:409.25px;">1928</div>
<div class="t cell" style="left:1235.3px;top:409.25px;">9900</div>
<svg class="a" style="left:1321.7px;top:407.25px" width="13.2" height="13.2" viewBox="0 0 24 24"><path fill="#3a5cb5" d="M12 4V1L8 5l4 4V6c3.31 0 6 2.69 6 6 0 1.01-.25 1.97-.7 2.8l1.46 1.46C19.54 15.03 20 13.57 20 12c0-4.42-3.58-8-8-8zm0 14c-3.31 0-6-2.69-6-6 0-1.01.25-1.97.7-2.8L5.24 7.74C4.46 8.97 4 10.43 4 12c0 4.420 3.58 8 8 8v3l4-4-4-4v3z"/></svg>
<svg class="a" style="left:1345.2px;top:407.0px" width="13.44" height="13.44" viewBox="0 0 24 24"><path fill="#3a5cb5" d="M13 3c-4.97 0-9 4.03-9 9H1l3.89 3.89.07.14L9 12H6c0-3.87 3.13-7 7-7s7 3.130 7 7-3.13 7-7 7c-1.93 0-3.68-.79-4.94-2.06l-1.42 1.42C8.27 19.99 10.51 21 13 21c4.97 0 9-4.03 9-9s-4.03-9-9-9zm-1 5v5l4.28 2.54.72-1.21-3.5-2.08V8H12z"/></svg>
<svg class="a" style="left:1374px;top:408.75px" width="3" height="11" viewBox="0 0 3 11"><circle cx="1.5" cy="2.35" r="1.2" fill="#3a5cb5"/><circle cx="1.5" cy="5.9" r="1.2" fill="#3a5cb5"/><circle cx="1.5" cy="9.45" r="1.2" fill="#3a5cb5"/></svg>
<div class="t cell" style="left:215.2px;top:447.65px;">6</div>
<div class="t cell" style="left:297.2px;top:447.65px;">Guantes</div>
<div class="t cell" style="left:476.2px;top:439.25px;line-height:13.5px">Equipo protección personal<br>(EPP)</div>
<div class="t cell" style="left:613px;top:447.65px;">Garmendia</div>
<div class="bd bb" style="left:696px;top:445.04999999999995px;width:45px;height:15px;line-height:13px">Asignado</div>
<div class="t lnk" style="left:810px;top:447.65px;">Labra, Macarena</div>
<div class="t cell" style="left:908px;top:447.65px;">2025-01-07</div>
<div class="t cell" style="left:1071.3px;top:447.65px;">Garmendia</div>
<div class="t cell" style="left:1153px;top:447.65px;">1908</div>
<div class="t cell" style="left:1235.3px;top:447.65px;">14990</div>
<svg class="a" style="left:1321.7px;top:445.65px" width="13.2" height="13.2" viewBox="0 0 24 24"><path fill="#3a5cb5" d="M12 4V1L8 5l4 4V6c3.31 0 6 2.69 6 6 0 1.01-.25 1.97-.7 2.8l1.46 1.46C19.54 15.03 20 13.57 20 12c0-4.42-3.58-8-8-8zm0 14c-3.31 0-6-2.69-6-6 0-1.01.25-1.97.7-2.8L5.24 7.74C4.46 8.97 4 10.43 4 12c0 4.420 3.58 8 8 8v3l4-4-4-4v3z"/></svg>
<svg class="a" style="left:1345.2px;top:445.4px" width="13.44" height="13.44" viewBox="0 0 24 24"><path fill="#3a5cb5" d="M13 3c-4.97 0-9 4.03-9 9H1l3.89 3.89.07.14L9 12H6c0-3.87 3.13-7 7-7s7 3.130 7 7-3.13 7-7 7c-1.93 0-3.68-.79-4.94-2.06l-1.42 1.42C8.27 19.99 10.51 21 13 21c4.97 0 9-4.03 9-9s-4.03-9-9-9zm-1 5v5l4.28 2.54.72-1.21-3.5-2.08V8H12z"/></svg>
<svg class="a" style="left:1374px;top:447.15px" width="3" height="11" viewBox="0 0 3 11"><circle cx="1.5" cy="2.35" r="1.2" fill="#3a5cb5"/><circle cx="1.5" cy="5.9" r="1.2" fill="#3a5cb5"/><circle cx="1.5" cy="9.45" r="1.2" fill="#3a5cb5"/></svg>
<div class="t cell" style="left:215.2px;top:484.25px;">15</div>
<div class="t cell" style="left:297.2px;top:484.25px;">Hp 22</div>
<div class="t cell" style="left:476.2px;top:484.25px;">Computadores</div>
<div class="t cell" style="left:613px;top:484.25px;">HP</div>
<div class="bd bb" style="left:696px;top:481.65px;width:45px;height:15px;line-height:13px">Asignado</div>
<div class="t lnk" style="left:810px;top:484.25px;">Concha, Pedro</div>
<div class="t cell" style="left:908px;top:484.25px;">2024-10-01</div>
<div class="t cell" style="left:990px;top:484.25px;">10293847565</div>
<div class="t cell" style="left:1071.3px;top:484.25px;">PC Factory</div>
<div class="t cell" style="left:1153px;top:484.25px;">4618192</div>
<div class="t cell" style="left:1235.3px;top:484.25px;">1100000</div>
<svg class="a" style="left:1321.7px;top:482.25px" width="13.2" height="13.2" viewBox="0 0 24 24"><path fill="#3a5cb5" d="M12 4V1L8 5l4 4V6c3.31 0 6 2.69 6 6 0 1.01-.25 1.97-.7 2.8l1.46 1.46C19.54 15.03 20 13.57 20 12c0-4.42-3.58-8-8-8zm0 14c-3.31 0-6-2.69-6-6 0-1.01.25-1.97.7-2.8L5.24 7.74C4.46 8.97 4 10.43 4 12c0 4.420 3.58 8 8 8v3l4-4-4-4v3z"/></svg>
<svg class="a" style="left:1345.2px;top:482.0px" width="13.44" height="13.44" viewBox="0 0 24 24"><path fill="#3a5cb5" d="M13 3c-4.97 0-9 4.03-9 9H1l3.89 3.89.07.14L9 12H6c0-3.87 3.13-7 7-7s7 3.130 7 7-3.13 7-7 7c-1.93 0-3.68-.79-4.94-2.06l-1.42 1.42C8.27 19.99 10.51 21 13 21c4.97 0 9-4.03 9-9s-4.03-9-9-9zm-1 5v5l4.28 2.54.72-1.21-3.5-2.08V8H12z"/></svg>
<svg class="a" style="left:1374px;top:483.75px" width="3" height="11" viewBox="0 0 3 11"><circle cx="1.5" cy="2.35" r="1.2" fill="#3a5cb5"/><circle cx="1.5" cy="5.9" r="1.2" fill="#3a5cb5"/><circle cx="1.5" cy="9.45" r="1.2" fill="#3a5cb5"/></svg>
<div class="t cell" style="left:215.2px;top:519.1px;">16</div>
<div class="t cell" style="left:297.2px;top:519.1px;">Hp 19</div>
<div class="t cell" style="left:476.2px;top:519.1px;">Computadores</div>
<div class="t cell" style="left:613px;top:519.1px;">HP</div>
<div class="bd bb" style="left:696px;top:516.5px;width:45px;height:15px;line-height:13px">Asignado</div>
<div class="t lnk" style="left:810px;top:519.1px;">Duarte, Valentina</div>
<div class="t cell" style="left:908px;top:519.1px;">2024-11-05</div>
<div class="t cell" style="left:990px;top:519.1px;">10293847563</div>
<div class="t cell" style="left:1071.3px;top:519.1px;">PC Factory</div>
<div class="t cell" style="left:1153px;top:519.1px;">4627193</div>
<div class="t cell" style="left:1235.3px;top:519.1px;">1240000</div>
<svg class="a" style="left:1321.7px;top:517.1px" width="13.2" height="13.2" viewBox="0 0 24 24"><path fill="#3a5cb5" d="M12 4V1L8 5l4 4V6c3.31 0 6 2.69 6 6 0 1.01-.25 1.97-.7 2.8l1.46 1.46C19.54 15.03 20 13.57 20 12c0-4.42-3.58-8-8-8zm0 14c-3.31 0-6-2.69-6-6 0-1.01.25-1.97.7-2.8L5.24 7.74C4.46 8.97 4 10.43 4 12c0 4.420 3.58 8 8 8v3l4-4-4-4v3z"/></svg>
<svg class="a" style="left:1345.2px;top:516.85px" width="13.44" height="13.44" viewBox="0 0 24 24"><path fill="#3a5cb5" d="M13 3c-4.97 0-9 4.03-9 9H1l3.89 3.89.07.14L9 12H6c0-3.87 3.13-7 7-7s7 3.130 7 7-3.13 7-7 7c-1.93 0-3.68-.79-4.94-2.06l-1.42 1.42C8.27 19.99 10.51 21 13 21c4.97 0 9-4.03 9-9s-4.03-9-9-9zm-1 5v5l4.28 2.54.72-1.21-3.5-2.08V8H12z"/></svg>
<svg class="a" style="left:1374px;top:518.6px" width="3" height="11" viewBox="0 0 3 11"><circle cx="1.5" cy="2.35" r="1.2" fill="#3a5cb5"/><circle cx="1.5" cy="5.9" r="1.2" fill="#3a5cb5"/><circle cx="1.5" cy="9.45" r="1.2" fill="#3a5cb5"/></svg>
<div class="t cell" style="left:215.2px;top:554.0px;">18</div>
<div class="t cell" style="left:297.2px;top:554.0px;">Iphone 11</div>
<div class="t cell" style="left:476.2px;top:554.0px;">Celulares</div>
<div class="t cell" style="left:613px;top:554.0px;">Apple</div>
<div class="bd bb" style="left:696px;top:551.4px;width:45px;height:15px;line-height:13px">Asignado</div>
<div class="t lnk" style="left:810px;top:554.0px;">Aldunce, Susann</div>
<div class="t cell" style="left:908px;top:554.0px;">2024-12-19</div>
<div class="t cell" style="left:1071.3px;top:554.0px;">Falabella</div>
<div class="t cell" style="left:1153px;top:554.0px;">45357</div>
<div class="t cell" style="left:1235.3px;top:554.0px;">135990</div>
<svg class="a" style="left:1321.7px;top:552.0px" width="13.2" height="13.2" viewBox="0 0 24 24"><path fill="#3a5cb5" d="M12 4V1L8 5l4 4V6c3.31 0 6 2.69 6 6 0 1.01-.25 1.97-.7 2.8l1.46 1.46C19.54 15.03 20 13.57 20 12c0-4.42-3.58-8-8-8zm0 14c-3.31 0-6-2.69-6-6 0-1.01.25-1.97.7-2.8L5.24 7.74C4.46 8.97 4 10.43 4 12c0 4.420 3.58 8 8 8v3l4-4-4-4v3z"/></svg>
<svg class="a" style="left:1345.2px;top:551.75px" width="13.44" height="13.44" viewBox="0 0 24 24"><path fill="#3a5cb5" d="M13 3c-4.97 0-9 4.03-9 9H1l3.89 3.89.07.14L9 12H6c0-3.87 3.13-7 7-7s7 3.130 7 7-3.13 7-7 7c-1.93 0-3.68-.79-4.94-2.06l-1.42 1.42C8.27 19.99 10.51 21 13 21c4.97 0 9-4.03 9-9s-4.03-9-9-9zm-1 5v5l4.28 2.54.72-1.21-3.5-2.08V8H12z"/></svg>
<svg class="a" style="left:1374px;top:553.5px" width="3" height="11" viewBox="0 0 3 11"><circle cx="1.5" cy="2.35" r="1.2" fill="#3a5cb5"/><circle cx="1.5" cy="5.9" r="1.2" fill="#3a5cb5"/><circle cx="1.5" cy="9.45" r="1.2" fill="#3a5cb5"/></svg>
<div class="t cell" style="left:215.2px;top:589.0px;">19</div>
<div class="t cell" style="left:297.2px;top:589.0px;">Hp 19</div>
<div class="t cell" style="left:476.2px;top:589.0px;">Computadores</div>
<div class="t cell" style="left:613px;top:589.0px;">HP</div>
<div class="bd bb" style="left:696px;top:586.4px;width:45px;height:15px;line-height:13px">Asignado</div>
<div class="t lnk" style="left:810px;top:589.0px;">Cordero, Felipe</div>
<svg class="a" style="left:1321.7px;top:587.0px" width="13.2" height="13.2" viewBox="0 0 24 24"><path fill="#3a5cb5" d="M12 4V1L8 5l4 4V6c3.31 0 6 2.69 6 6 0 1.01-.25 1.97-.7 2.8l1.46 1.46C19.54 15.03 20 13.57 20 12c0-4.42-3.58-8-8-8zm0 14c-3.31 0-6-2.69-6-6 0-1.01.25-1.97.7-2.8L5.24 7.74C4.46 8.97 4 10.43 4 12c0 4.420 3.58 8 8 8v3l4-4-4-4v3z"/></svg>
<svg class="a" style="left:1345.2px;top:586.75px" width="13.44" height="13.44" viewBox="0 0 24 24"><path fill="#3a5cb5" d="M13 3c-4.97 0-9 4.03-9 9H1l3.89 3.89.07.14L9 12H6c0-3.87 3.13-7 7-7s7 3.130 7 7-3.13 7-7 7c-1.93 0-3.68-.79-4.94-2.06l-1.42 1.42C8.27 19.99 10.51 21 13 21c4.97 0 9-4.03 9-9s-4.03-9-9-9zm-1 5v5l4.28 2.54.72-1.21-3.5-2.08V8H12z"/></svg>
<svg class="a" style="left:1374px;top:588.5px" width="3" height="11" viewBox="0 0 3 11"><circle cx="1.5" cy="2.35" r="1.2" fill="#3a5cb5"/><circle cx="1.5" cy="5.9" r="1.2" fill="#3a5cb5"/><circle cx="1.5" cy="9.45" r="1.2" fill="#3a5cb5"/></svg>
<div class="t cell" style="left:215.2px;top:624.0px;">20</div>
<div class="t cell" style="left:297.2px;top:624.0px;">Galaxy</div>
<div class="t cell" style="left:476.2px;top:624.0px;">Celulares</div>
<div class="t cell" style="left:613px;top:624.0px;">Samsung</div>
<div class="bd bb" style="left:696px;top:621.4px;width:45px;height:15px;line-height:13px">Asignado</div>
<div class="t lnk" style="left:810px;top:624.0px;">María, Luz</div>
<svg class="a" style="left:1321.7px;top:622.0px" width="13.2" height="13.2" viewBox="0 0 24 24"><path fill="#3a5cb5" d="M12 4V1L8 5l4 4V6c3.31 0 6 2.69 6 6 0 1.01-.25 1.97-.7 2.8l1.46 1.46C19.54 15.03 20 13.57 20 12c0-4.42-3.58-8-8-8zm0 14c-3.31 0-6-2.69-6-6 0-1.01.25-1.97.7-2.8L5.24 7.74C4.46 8.97 4 10.43 4 12c0 4.420 3.58 8 8 8v3l4-4-4-4v3z"/></svg>
<svg class="a" style="left:1345.2px;top:621.75px" width="13.44" height="13.44" viewBox="0 0 24 24"><path fill="#3a5cb5" d="M13 3c-4.97 0-9 4.03-9 9H1l3.89 3.89.07.14L9 12H6c0-3.87 3.13-7 7-7s7 3.130 7 7-3.13 7-7 7c-1.93 0-3.68-.79-4.94-2.06l-1.42 1.42C8.27 19.99 10.51 21 13 21c4.97 0 9-4.03 9-9s-4.03-9-9-9zm-1 5v5l4.28 2.54.72-1.21-3.5-2.08V8H12z"/></svg>
<svg class="a" style="left:1374px;top:623.5px" width="3" height="11" viewBox="0 0 3 11"><circle cx="1.5" cy="2.35" r="1.2" fill="#3a5cb5"/><circle cx="1.5" cy="5.9" r="1.2" fill="#3a5cb5"/><circle cx="1.5" cy="9.45" r="1.2" fill="#3a5cb5"/></svg>
<div class="t cell" style="left:215.2px;top:659.0px;">45</div>
<div class="t cell" style="left:297.2px;top:659.0px;">19 pulgadas</div>
<div class="t cell" style="left:476.2px;top:659.0px;">Monitores</div>
<div class="t cell" style="left:613px;top:659.0px;">Samsung</div>
<div class="bd bb" style="left:696px;top:656.4px;width:45px;height:15px;line-height:13px">Asignado</div>
<div class="t lnk" style="left:810px;top:659.0px;">Villalobos, Valeria</div>
<div class="t cell" style="left:908px;top:659.0px;">2024-11-20</div>
<div class="t cell" style="left:1071.3px;top:659.0px;">Falabella</div>
<div class="t cell" style="left:1153px;top:659.0px;">123</div>
<div class="t cell" style="left:1235.3px;top:659.0px;">500</div>
<svg class="a" style="left:1321.7px;top:657.0px" width="13.2" height="13.2" viewBox="0 0 24 24"><path fill="#3a5cb5" d="M12 4V1L8 5l4 4V6c3.31 0 6 2.69 6 6 0 1.01-.25 1.97-.7 2.8l1.46 1.46C19.54 15.03 20 13.57 20 12c0-4.42-3.58-8-8-8zm0 14c-3.31 0-6-2.69-6-6 0-1.01.25-1.97.7-2.8L5.24 7.74C4.46 8.97 4 10.43 4 12c0 4.420 3.58 8 8 8v3l4-4-4-4v3z"/></svg>
<svg class="a" style="left:1345.2px;top:656.75px" width="13.44" height="13.44" viewBox="0 0 24 24"><path fill="#3a5cb5" d="M13 3c-4.97 0-9 4.03-9 9H1l3.89 3.89.07.14L9 12H6c0-3.87 3.13-7 7-7s7 3.130 7 7-3.13 7-7 7c-1.93 0-3.68-.79-4.94-2.06l-1.42 1.42C8.27 19.99 10.51 21 13 21c4.97 0 9-4.03 9-9s-4.03-9-9-9zm-1 5v5l4.28 2.54.72-1.21-3.5-2.08V8H12z"/></svg>
<svg class="a" style="left:1374px;top:658.5px" width="3" height="11" viewBox="0 0 3 11"><circle cx="1.5" cy="2.35" r="1.2" fill="#3a5cb5"/><circle cx="1.5" cy="5.9" r="1.2" fill="#3a5cb5"/><circle cx="1.5" cy="9.45" r="1.2" fill="#3a5cb5"/></svg>
<div class="a" style="left:1327px;top:645.5px;width:27px;height:27px;border-radius:50%;background:#2a4fa7;box-shadow:0 1px 3px rgba(42,79,167,.35)"></div>
<svg class="a" style="left:1336px;top:656.5px" width="10" height="6" viewBox="0 0 10 6"><rect x="0.3" y="0.3" width="8.4" height="4" rx="2" fill="#fff"/><path d="M6 4l1.5 1.5V4z" fill="#fff"/></svg>
<div class="a" style="left:1362.8px;top:644.8px;width:27px;height:27.2px;border-radius:15px 10px 0 6px / 15px 12px 0 14px;background:#2a4fa7"></div>
<svg class="a" style="left:1371.5px;top:653px" width="10" height="11" viewBox="0 0 10 11"><rect x="0" y="0" width="9.5" height="10.5" rx="0.8" fill="#fff"/><path d="M2 7.5q2.7 1.4 5.5 0" stroke="#2a4fa7" stroke-width="0.6" fill="none"/></svg>
<div class="a" style="left:1389.5px;top:655.5px;width:5.5px;height:5.5px;border-radius:50%;background:#f33b45"></div>
<div class="a" style="left:1280px;top:69px;width:128px;height:47px;border:2px solid #f24a3c"></div>
<div class="a" style="left:0;top:681px;width:1408px;height:15px;background:#f2f2f2;border-top:1px solid #fbfbf8"></div>
<div class="a" style="left:25px;top:682px;width:1px;height:14px;background:#dedede"></div>
<div class="a" style="left:85px;top:682px;width:1px;height:14px;background:#dedede"></div>
<div class="a" style="left:146px;top:682px;width:1px;height:14px;background:#dedede"></div>
<div class="a" style="left:207px;top:682px;width:1px;height:14px;background:#dedede"></div>
<div class="a" style="left:267px;top:682px;width:1px;height:14px;background:#dedede"></div>
<div class="a" style="left:328px;top:682px;width:1px;height:14px;background:#dedede"></div>
<div class="a" style="left:389px;top:682px;width:1px;height:14px;background:#dedede"></div>
<div class="a" style="left:449px;top:682px;width:1px;height:14px;background:#dedede"></div>
<div class="a" style="left:510px;top:682px;width:1px;height:14px;background:#dedede"></div>
<div class="a" style="left:570px;top:682px;width:1px;height:14px;background:#dedede"></div>
<div class="a" style="left:631px;top:682px;width:1px;height:14px;background:#dedede"></div>
<div class="a" style="left:692px;top:682px;width:1px;height:14px;background:#dedede"></div>
<div class="a" style="left:752px;top:682px;width:1px;height:14px;background:#dedede"></div>
<div class="a" style="left:813px;top:682px;width:1px;height:14px;background:#dedede"></div>
<div class="a" style="left:873px;top:682px;width:1px;height:14px;background:#dedede"></div>
<div class="a" style="left:934px;top:682px;width:1px;height:14px;background:#dedede"></div>
<div class="a" style="left:995px;top:682px;width:1px;height:14px;background:#dedede"></div>
<div class="a" style="left:1055px;top:682px;width:1px;height:14px;background:#dedede"></div>
<div class="a" style="left:1116px;top:682px;width:1px;height:14px;background:#dedede"></div>
<div class="a" style="left:1177px;top:682px;width:1px;height:14px;background:#dedede"></div>
<div class="a" style="left:1237px;top:682px;width:1px;height:14px;background:#dedede"></div>
<div class="a" style="left:1298px;top:682px;width:1px;height:14px;background:#dedede"></div>
<div class="a" style="left:1358px;top:682px;width:1px;height:14px;background:#dedede"></div>
<div class="a" style="left:1419px;top:682px;width:1px;height:14px;background:#dedede"></div>
<svg class="a" style="left:0;top:677px" width="4" height="4" viewBox="0 0 4 4"><path d="M0 0L3 4H0z" fill="#8a7040"/></svg></body></html>
